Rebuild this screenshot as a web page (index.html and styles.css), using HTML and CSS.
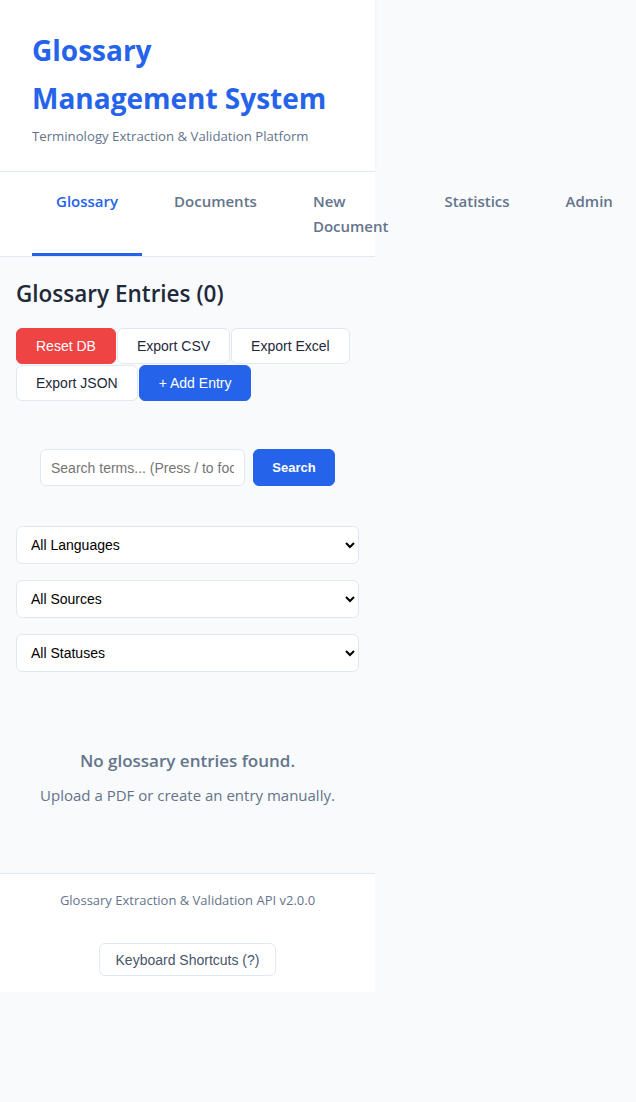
FILE: index.html
```html
<!DOCTYPE html>
<html lang="en">
<head>
<meta charset="utf-8">
<title>Glossary Management System</title>
<link rel="stylesheet" href="styles.css">
</head>
<body>
<div class="app">
  <header class="header">
    <h1 class="title">Glossary Management System</h1>
    <p class="subtitle">Terminology Extraction &amp; Validation Platform</p>
  </header>
  <nav class="nav">
    <a class="tab active">Glossary</a>
    <a class="tab">Documents</a>
    <a class="tab">New Document</a>
    <a class="tab">Statistics</a>
    <a class="tab">Admin</a>
  </nav>
  <main class="main">
    <h2 class="section-title">Glossary Entries (0)</h2>
    <div class="actions">
      <button class="btn btn-danger">Reset DB</button>
      <button class="btn">Export CSV</button>
      <button class="btn">Export Excel</button>
      <button class="btn">Export JSON</button>
      <button class="btn btn-primary">+ Add Entry</button>
    </div>
    <div class="search">
      <input class="search-input" type="text" placeholder="Search terms... (Press / to focus)">
      <button class="search-btn">Search</button>
    </div>
    <div class="filters">
      <select class="filter"><option>All Languages</option></select>
      <select class="filter"><option>All Sources</option></select>
      <select class="filter"><option>All Statuses</option></select>
    </div>
    <div class="empty">
      <p class="empty-title">No glossary entries found.</p>
      <p class="empty-text">Upload a PDF or create an entry manually.</p>
    </div>
  </main>
  <footer class="footer">
    <p class="footer-text">Glossary Extraction &amp; Validation API v2.0.0</p>
    <button class="shortcut-btn">Keyboard Shortcuts (?)</button>
  </footer>
</div>
</body>
</html>
```

FILE: styles.css
```css
* { box-sizing: border-box; }
body {
  margin: 0;
  background: #f8fafc;
  font-family: "Open Sans", "Noto Sans", sans-serif;
  color: #1e293b;
}
.app {
  width: 375px;
}
.header {
  background: #fff;
  padding: 26px 32px 25px;
  border-bottom: 1px solid #e2e8f0;
  box-shadow: 1px 0 2px rgba(0,0,0,0.04);
}
.title {
  margin: 0;
  font-size: 28px;
  line-height: 48px;
  font-weight: 700;
  color: #2563eb;
}
.subtitle {
  margin: 4px 0 0;
  font-size: 13.2px;
  line-height: 20px;
  color: #64748b;
}
.nav {
  display: flex;
  gap: 8px;
  background: #fff;
  padding: 0 32px;
  border-bottom: 1px solid #e2e8f0;
}
.tab {
  padding: 17px 24px 14px;
  font-size: 15px;
  line-height: 25px;
  font-weight: 600;
  color: #64748b;
  border-bottom: 3px solid transparent;
  min-width: min-content;
}
.tab.active {
  color: #2563eb;
  border-bottom-color: #2563eb;
}
.main {
  padding: 20px 16px 25px;
}
.section-title {
  margin: 0 0 17px;
  font-size: 22.5px;
  line-height: 34px;
  font-weight: 600;
  color: #1e293b;
}
.actions {
  display: flex;
  flex-wrap: wrap;
  gap: 1px;
}
.btn {
  height: 36px;
  padding: 0 19px;
  border: 1px solid #e2e8f0;
  border-radius: 6px;
  background: #fff;
  font-family: "Liberation Sans", Arial, sans-serif;
  font-size: 14px;
  color: #1e293b;
}
.btn-danger {
  background: #ef4444;
  border-color: #ef4444;
  color: #fff;
}
.btn-primary {
  background: #2563eb;
  border-color: #2563eb;
  color: #fff;
}
.search {
  display: flex;
  justify-content: center;
  gap: 8px;
  margin-top: 48px;
}
.search-input {
  width: 205px;
  height: 37px;
  padding: 0 10px;
  border: 1px solid #e2e8f0;
  border-radius: 6px;
  background: #fff;
  font-family: "Liberation Sans", Arial, sans-serif;
  font-size: 14px;
  color: #1e293b;
}
.search-input::placeholder { color: #757575; }
.search-btn {
  width: 82px;
  height: 37px;
  border: 1px solid #2563eb;
  border-radius: 6px;
  background: #2563eb;
  color: #fff;
  font-family: "Liberation Sans", Arial, sans-serif;
  font-size: 13px;
  font-weight: 600;
}
.filters {
  display: flex;
  flex-direction: column;
  gap: 16px;
  margin-top: 40px;
}
.filter {
  width: 100%;
  height: 38px;
  padding: 0 10px;
  border: 1px solid #e2e8f0;
  border-radius: 6px;
  background: #fff;
  font-family: "Liberation Sans", Arial, sans-serif;
  font-size: 14px;
  color: #000;
}
.empty {
  text-align: center;
  padding: 76px 16px 41px;
}
.empty-title {
  margin: 0 0 9px;
  font-size: 17px;
  line-height: 26px;
  font-weight: 600;
  color: #64748b;
}
.empty-text {
  margin: 0;
  font-size: 15px;
  line-height: 24px;
  color: #64748b;
}
.footer {
  background: #fff;
  border-top: 1px solid #e2e8f0;
  text-align: center;
  padding: 16px 16px 16px;
}
.footer-text {
  margin: 0 0 33px;
  font-size: 13px;
  line-height: 20px;
  color: #64748b;
}
.shortcut-btn {
  height: 33px;
  padding: 0 16px;
  border: 1px solid #e2e8f0;
  border-radius: 6px;
  background: #fff;
  font-family: "Liberation Sans", Arial, sans-serif;
  font-size: 14px;
  color: #475569;
}
```
